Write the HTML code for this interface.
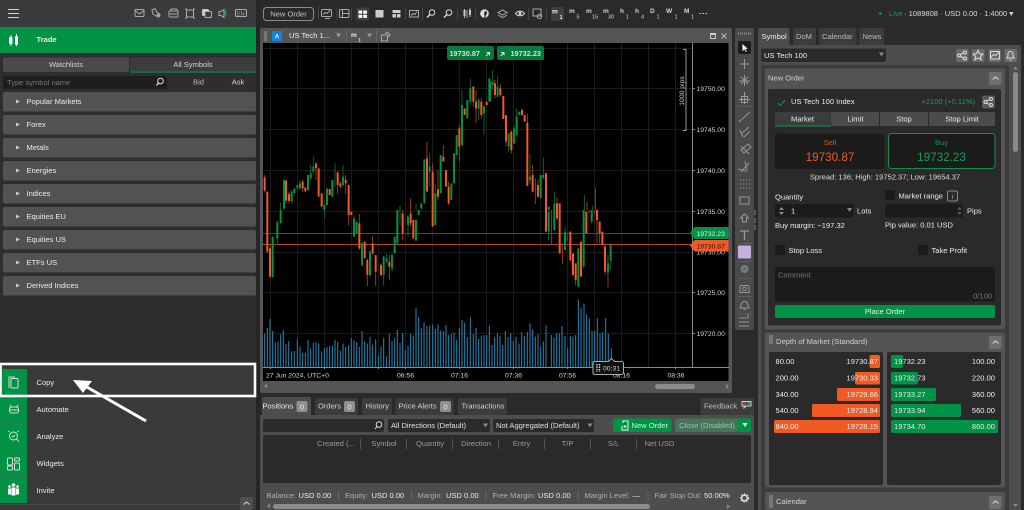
<!DOCTYPE html>
<html><head><meta charset="utf-8"><style>
html,body{margin:0;padding:0;background:#2a2a2a;width:1024px;height:510px;overflow:hidden}
svg{display:block;position:absolute;left:0;top:0}
text{font-family:"Liberation Sans",sans-serif;font-size:7.55px;fill:#d4d4d4}
.w{fill:#ececec}.d{fill:#9a9a9a}.m{text-anchor:middle}.e{text-anchor:end}.s{font-size:5.5px}.b{font-weight:bold}
.a{font-size:6.8px}
.ob,.gb,.ow,.gw,.v{fill:none}
.ob{stroke:#f15a24;stroke-width:6}.gb{stroke:#009245;stroke-width:6}
.ow{stroke:#a8431c;stroke-width:2.6}.gw{stroke:#0a6e38;stroke-width:2.6}
.v{stroke:#2280ae;stroke-width:3.2}
.i{fill:none;stroke:#ababab;stroke-width:1}
.i2{fill:none;stroke:#dcdcdc;stroke-width:1}
</style></head><body>
<svg width="1024" height="510" viewBox="0 0 1024 510">
<!-- base -->
<rect width="1024" height="510" fill="#2a2a2a"/>
<!-- left panel -->
<rect width="256" height="27" fill="#3b3b3b"/>
<rect y="27" width="256" height="336" fill="#2e2e2e"/>
<rect y="363" width="256" height="147" fill="#3a3a3a"/>
<rect x="256" width="4" height="510" fill="#262626"/>
<path d="M8 9.500h11M8 13.500h11M8 17.500h11" stroke="#d0d0d0" stroke-width="1"/>
<!-- top-left icons -->
<g class="i">
<rect x="135" y="9.500" width="9" height="7" rx="1"/><path d="M135 10.500l4.500 3.500 4.500-3.500"/>
<path d="M152 10l3-1.500 2 4 2 1v2l-3 .5-3-2z"/><circle cx="158.500" cy="15.500" r="1.500"/>
<rect x="169" y="11" width="9" height="6" rx="1"/><path d="M170 11l1.500-2h5l1.500 2M170 14h7"/>
<path d="M186.500 10h7v7h-7zM185 9h2M185 18h2M193 9h2M193 18h2"/>
<rect x="202.500" y="9.500" width="6" height="6" rx="1" fill="#ccc" stroke="#ccc"/><rect x="205" y="11.500" width="6.500" height="6" rx="1" fill="#3b3b3b"/>
<path d="M219 11.500h2l3-2v8l-3-2h-2z"/>
<rect x="235.500" y="9.500" width="11" height="7" rx="1"/>
</g>
<path d="M226 10.500v5l-1.500-2.500z" fill="#159a4c" stroke="#159a4c"/>
<text x="237" y="15.500" style="font-size:5.500px" class="d">EN</text>
<!-- Trade -->
<rect y="27" width="256" height="26" fill="#009245"/>
<path d="M11 35v11M16.500 34v12" stroke="#fff" stroke-width="1"/><rect x="9" y="37" width="3.500" height="7" rx="1" fill="#fff"/><rect x="15" y="36" width="3" height="9" rx="1" fill="#fff"/>
<text x="36.500" y="42" class="w b">Trade</text>
<!-- tabs -->
<rect x="3" y="57.500" width="126" height="14.500" rx="2" fill="#4a4a4a"/>
<rect x="130" y="57.500" width="126" height="15" rx="2" fill="#3c3c3c"/>
<rect x="130" y="71.500" width="126" height="1.200" fill="#0a8a44"/>
<text x="66" y="67" class="m">Watchlists</text><text x="193" y="67" class="m">All Symbols</text>
<rect x="3" y="76" width="164" height="13" rx="2" fill="#1e1e1e"/>
<text x="7" y="85" class="d" style="fill:#777">Type symbol name</text>
<circle cx="160.500" cy="81" r="2.800" class="i2"/><path d="M158.500 83l-2 2.500" stroke="#e8e8e8" stroke-width="1.200"/>
<text x="198.500" y="84.500" class="m" style="fill:#b8b8b8">Bid</text><text x="238" y="84.500" class="m">Ask</text>
<!-- market rows -->
<g fill="#525252">
<rect x="3" y="92" width="253" height="19.500" rx="2"/><rect x="3" y="115" width="253" height="19.500" rx="2"/><rect x="3" y="138" width="253" height="19.500" rx="2"/><rect x="3" y="161" width="253" height="19.500" rx="2"/><rect x="3" y="184" width="253" height="19.500" rx="2"/><rect x="3" y="207" width="253" height="19.500" rx="2"/><rect x="3" y="230" width="253" height="19.500" rx="2"/><rect x="3" y="253" width="253" height="19.500" rx="2"/><rect x="3" y="276" width="253" height="19.500" rx="2"/>
</g>
<g fill="#c8c8c8"><path d="M16 99.500l4 2-4 2zM16 122.500l4 2-4 2zM16 145.500l4 2-4 2zM16 168.500l4 2-4 2zM16 191.500l4 2-4 2zM16 214.500l4 2-4 2zM16 237.500l4 2-4 2zM16 260.500l4 2-4 2zM16 283.500l4 2-4 2z"/></g>
<text x="26.500" y="104" class="w">Popular Markets</text><text x="26.500" y="127" class="w">Forex</text><text x="26.500" y="150" class="w">Metals</text><text x="26.500" y="173" class="w">Energies</text><text x="26.500" y="196" class="w">Indices</text><text x="26.500" y="219" class="w">Equities EU</text><text x="26.500" y="242" class="w">Equities US</text><text x="26.500" y="265" class="w">ETFs US</text><text x="26.500" y="288" class="w">Derived Indices</text>
<!-- bottom menu -->
<rect x="0" y="369" width="27" height="134" fill="#009245"/>
<path d="M0 422.500h27M0 449.500h27M0 476.500h27M0 396.500h27" stroke="#2f7a50" stroke-width="1"/>
<path d="M0 504.500h256" stroke="#4b4b4b"/>
<g class="i2">
<path d="M9 388v-11h6"/><rect x="11" y="378.500" width="7" height="9.500" rx="1" fill="#009245"/>
<rect x="9.500" y="407" width="9" height="6" rx="2"/><path d="M10 405l1.500 2M18 405l-1.500 2M9.500 410h9"/>
<circle cx="13.500" cy="436" r="4"/><path d="M16.500 439l2.500 2.500M8 431l1.500 1M19 431l-1.500 1M11.500 436l1.500 1 2-2"/>
<rect x="7.500" y="458" width="5" height="7" rx="1"/><rect x="14.500" y="458" width="5" height="3" rx="1"/><rect x="7.500" y="466" width="5" height="4" rx="1"/><rect x="14.500" y="463" width="5" height="7" rx="1"/>
</g>
<g fill="#fff"><circle cx="13.500" cy="485" r="1.800"/><path d="M11.500 487.500h4v8h-4z"/><circle cx="9.500" cy="486.500" r="1.300"/><path d="M8 488.500h3v6H8z"/><circle cx="17.500" cy="486.500" r="1.300"/><path d="M16 488.500h3v6h-3z"/></g>
<text x="36.500" y="385" class="w">Copy</text><text x="36.500" y="412" class="w">Automate</text><text x="36.500" y="439" class="w">Analyze</text><text x="36.500" y="466" class="w">Widgets</text><text x="36.500" y="493" class="w">Invite</text>
<rect x="240" y="497" width="13" height="13" rx="1.500" fill="#4f4f4f"/><path d="M243.500 504.500l3-2.500 3 2.500" class="i2"/>
<!-- highlight -->
<rect x="0.500" y="364" width="254.500" height="32" fill="none" stroke="#fff" stroke-width="2.600"/>
<path d="M146 421L85 386" stroke="#fff" stroke-width="3"/><path d="M73 380l19 1-9 12z" fill="#fff"/>
<!-- top bar -->
<rect x="263.500" y="7.500" width="50" height="13" rx="3" fill="#2a2a2a" stroke="#8a8a8a"/><text x="288.500" y="16.500" class="m" style="fill:#c4c4c4">New Order</text>
<path d="M318.500 7v13M337 7v13M351.500 7v13M405.500 7v13M422.500 7v13M457.500 7v13M475.500 7v13M528.500 7v13M546.500 7v13" stroke="#444"/>
<g class="i">
<rect x="321.500" y="9.500" width="10" height="7" rx="1"/><path d="M323 14.500l2-2 2 1 3-3M325 18.500h5"/>
<rect x="339.500" y="9.500" width="9.500" height="8" rx="1"/><path d="M342.500 9.500v8M342.500 13.500h6.500"/>
</g>
<rect x="356.500" y="7.500" width="12.500" height="13" rx="2" fill="#3e3e3e"/>
<path d="M358.500 10.500h3.700v3.200h-3.700zM363.200 10.500h3.700v3.200h-3.700zM358.500 14.700h3.700v3.200h-3.700zM363.200 14.700h3.700v3.200h-3.700z" fill="#fff"/>
<rect x="375.500" y="10" width="8" height="7.500" fill="#ccc"/>
<path d="M392.500 10h8v3h-8zM392.500 14h3.500v3.500h-3.500zM397 14h3.500v3.500H397z" fill="#ccc"/>
<g class="i"><path d="M409.500 10.500h9v6.500h-9zM411 15.500l2-2 2 1 2-3"/>
<circle cx="432" cy="12.500" r="2.800" stroke="#ddd"/><path d="M430 14.500l-3 3" stroke="#ddd" stroke-width="1.400"/><circle cx="449" cy="12.500" r="2.800" stroke="#ddd"/><path d="M447 14.500l-3 3" stroke="#ddd" stroke-width="1.400"/>
<path d="M464.500 9v9M467 10v8M470 8v9"/><path d="M498 12.500l4.500-2.500 4.500 2.500-4.500 2.500zM498 15l4.500 2.500 4.500-2.500"/><path d="M515.500 13.500c2-3 7-3 9 0-2 3-7 3-9 0z" stroke="#ddd"/>
<rect x="533" y="9" width="8" height="7"/><circle cx="539.500" cy="16.500" r="2.200"/></g>
<rect x="463.500" y="10" width="2" height="6" fill="#ccc"/><rect x="469" y="10" width="2" height="5" fill="#ccc"/>
<circle cx="484.500" cy="13.500" r="4.300" fill="#ddd"/><path d="M485 17.500v-5.500h2M484 13.800h3" stroke="#2a2a2a" stroke-width="1.200"/>
<circle cx="520" cy="13.500" r="1.500" fill="#ddd"/>
<rect x="551" y="7" width="13" height="14" rx="2" fill="#3e3e3e"/>
<text x="552" y="13.500" class="b w" style="font-size:6.500px">m</text><text x="559.500" y="19" class="s b w">1</text>
<text x="569" y="13" class="b" style="font-size:6.500px">m</text><text x="576.500" y="18.500" class="s">5</text>
<text x="586" y="13" class="b" style="font-size:6.500px">m</text><text x="592" y="18.500" class="s">15</text>
<text x="603" y="13" class="b" style="font-size:6.500px">m</text><text x="608" y="18.500" class="s">30</text>
<text x="620" y="13" class="b" style="font-size:6.500px">h</text><text x="626" y="18.500" class="s">1</text>
<text x="635" y="13" class="b" style="font-size:6.500px">h</text><text x="641" y="18.500" class="s">4</text>
<text x="650" y="13" class="b" style="font-size:6.500px">D</text><text x="656.500" y="18.500" class="s">1</text>
<text x="666" y="13" class="b" style="font-size:6.500px">W</text><text x="674.500" y="18.500" class="s">1</text>
<text x="684" y="13" class="b" style="font-size:6.500px">M</text><text x="691" y="18.500" class="s">1</text>
<path d="M699.500 13.500h1.500M702.500 13.500h1.500M705.500 13.500h1.500" stroke="#ddd"/>
<circle cx="880.500" cy="13.500" r="1.500" fill="#0a8a44"/>
<text x="889" y="16" style="fill:#139a4e">Live</text>
<text x="904" y="16" style="fill:#dcdcdc">· 1089808 · USD 0.00 · 1:4000</text>
<path d="M1009 12h4.500l-2.200 4z" fill="#ccc"/>

<!-- chart panel -->
<rect x="260" y="28" width="472" height="365" rx="2" fill="#555"/>
<rect x="263" y="43" width="465.500" height="338" fill="#000"/>
<rect x="264" y="31" width="3" height="10" fill="#777"/>
<rect x="272" y="31" width="10" height="10" fill="#0a84e0"/><text x="277" y="38.500" class="m b w" style="font-size:6.500px">A</text>
<text x="289" y="38" class="w">US Tech 1...</text><path d="M336 33.500h5l-2.500 4z" fill="#999"/>
<path d="M346.500 30v11" stroke="#6a6a6a"/>
<text x="351" y="37" class="b w" style="font-size:6.500px">m</text><text x="358" y="42" class="s w">1</text><path d="M367 33.500h5l-2.500 4z" fill="#999"/>
<path d="M376.500 30v11" stroke="#6a6a6a"/>
<g class="i"><rect x="381.500" y="35" width="6" height="6"/><path d="M385 34l2-2 3 3-2 2"/></g>
<rect x="710.500" y="33.500" width="5" height="5" fill="none" stroke="#ccc"/><path d="M710.500 34.500h5" stroke="#ccc"/>
<path d="M721.500 33.500l5 5M726.500 33.500l-5 5" stroke="#bbb"/>
<!-- grid -->
<g stroke="#1b1b1b" stroke-width="1">
<path d="M270.500 43v324M297.500 43v324M324.500 43v324M351.500 43v324M378.500 43v324M405.500 43v324M432.500 43v324M459.500 43v324M486.500 43v324M513.500 43v324M540.500 43v324M567.500 43v324M594.500 43v324M621.500 43v324M648.500 43v324M675.500 43v324"/>
<path d="M263 48.500h429M263 88.500h429M263 129.500h429M263 170.500h429M263 211.500h429M263 252.500h429M263 292.500h429M263 333.500h429"/>
</g>
<!-- price lines -->
<path d="M263 233.500h428" stroke="#0b6a38"/><path d="M263 244.500h428" stroke="#b34a1d"/>
<!-- volumes -->
<g transform="translate(260 200) scale(.33333)"><path class="v" d="M14 502V400M22 502V383M30 502V357M38 502V393M46 502V427M54 502V424M62 502V403M70 502V391M78 502V431M86 502V423M95 502V454M103 502V453M112 502V418M120 502V440M128 502V458M136 502V458M144 502V420M152 502V445M160 502V428M168 502V426M176 502V431M185 502V454M193 502V444M201 502V441M209 502V438M217 502V437M225 502V420M233 502V426M241 502V452M249 502V431M257 502V441M266 502V436M274 502V414M282 502V420M290 502V426M298 502V441M306 502V393M314 502V424M322 502V430M330 502V410M338 502V434M347 502V418M355 502V467M363 502V440M371 502V414M380 502V469M388 502V401M396 502V423M404 502V415M412 502V390M420 502V429M428 502V399M436 502V450M444 502V438M452 502V402M460 502V407M468 502V324M476 502V351M484 502V384M492 502V367M501 502V378M509 502V376M518 502V374M526 502V387M534 502V373M542 502V391M550 502V393M558 502V375M566 502V405M574 502V402M582 502V397M590 502V420M598 502V384M606 502V360M614 502V368M622 502V411M631 502V351M640 502V402M648 502V384M656 502V417M664 502V407M672 502V405M680 502V405M688 502V377"/></g>
<g transform="translate(490 200) scale(.33333)"><path class="v" d="M6 502V435M14 502V412M22 502V400M30 502V407M38 502V435M46 502V393M54 502V411M62 502V400M70 502V423M78 502V410M87 502V431M95 502V397M103 502V408M112 502V396M120 502V370M128 502V389M136 502V410M144 502V403M152 502V441M160 502V424M168 502V376M184 502V405M192 502V412M200 502V400M208 502V400M216 502V378M225 502V408M233 502V443M241 502V408M249 502V410M257 502V405M265 502V298M273 502V325M282 502V311M290 502V343M298 502V355M306 502V392M314 502V392M322 502V354M330 502V400M338 502V396M347 502V354M355 502V401M364 502V445"/></g>
<!-- candles Z8 -->
<g transform="translate(260 40) scale(.33333)">
<path class="ow" d="M14 405V458M78 420V490M87 455V490M128 418V455M168 368V420M233 395V462M241 425V445M257 405V462M501 305V360M518 370V395M534 390V480M550 315V365M566 425V495M598 255V365M640 138V200M648 150V250M664 175V235M452 475V510"/>
<path class="gw" d="M62 488V510M72 418V510M95 450V490M120 420V450M144 405V452M152 375V420M160 350V400M193 490V510M225 370V440M249 375V440M420 498V510M468 492V510M484 488V510M509 340V440M526 430V510M606 150V320M631 115V190M656 175V240M672 195V285"/>
<path class="ob" d="M14 412V452M22 455V510M78 422V482M87 462V483M128 425V445M136 442V455M168 370V385M176 385V470M185 460V500M209 447V465M233 397V435M241 430V440M257 420V430M266 435V510M501 355V455M518 395V510M534 448V470M550 350V365M558 390V440M566 440V490M598 265V320M614 205V225M640 140V185M648 185V205M664 185V225M680 185V195"/>
<path class="gb" d="M72 420V505M95 455V485M103 445V460M112 435V445M120 430V445M144 405V450M152 400V415M160 380V395M201 445V495M217 420V470M249 410V435M193 495V510M484 490V505M493 358V490M509 380V395M526 460V510M542 345V460M574 430V480M582 340V430M590 285V345M606 195V315M622 180V235M631 145V185M656 180V205M672 200V220M688 115V185"/>
</g>
<g transform="translate(260 200) scale(.33333)">
<path class="ow" d="M22 30V160M30 140V235M266 30V75M298 42V150M322 175V258M338 108V165M347 165V258M363 190V228M388 165V240M428 30V122M452 30V80M460 60V118"/>
<path class="gw" d="M52 65V135M193 30V55M282 45V110M306 125V200M330 150V230M371 168V258M380 162V190M396 160V215M412 30V130M420 18V75M444 45V110M468 60V122"/>
<path class="ob" d="M22 30V155M30 145V230M266 30V45M274 35V45M298 70V145M314 125V175M322 180V225M338 130V160M347 165V215M363 195V225M388 185V200M428 40V100M452 40V70M460 60V115M518 30V80"/>
<path class="gb" d="M38 110V232M52 65V115M62 30V70M282 55V110M290 65V100M306 130V195M330 155V225M371 170V225M380 175V185M396 165V205M404 110V160M412 30V130M444 50V75M468 60V122M476 30V45M526 30V75"/>
</g>
<g transform="translate(490 40) scale(.33333)">
<path class="ow" d="M15 120V175M31 132V170M48 225V318M64 272V340M96 205V228M112 222V438M128 375V458M136 415V492M144 418V472M168 398V510M201 472V510M291 485V510M316 442V510"/>
<path class="gw" d="M8 90V150M23 108V172M56 280V335M72 258V312M80 205V288M120 340V432M160 352V415M193 455V510M283 465V510M307 497V510"/>
<path class="ob" d="M15 130V165M31 145V165M40 168V237M48 225V305M64 275V330M96 210V225M104 225V245M112 248V438M128 405V455M144 435V470M168 400V510M201 490V510M209 490V510"/>
<path class="gb" d="M0 125V185M8 125V135M23 140V170M56 280V320M72 265V310M80 230V285M88 215V225M120 410V420M152 405V475M160 405V415M176 500V510M193 490V510"/>
</g>
<g transform="translate(490 200) scale(.33333)">
<path class="ow" d="M185 30V135M201 30V60M217 130V192M241 95V185M257 190V255M273 125V230M297 30V40M313 30V40M321 30V130M329 65V130M345 130V225M354 165V262"/>
<path class="gw" d="M176 35V122M193 30V92M225 80V152M233 98V125M265 145V262M281 30V205M305 30V70M362 135V208"/>
<path class="ob" d="M168 30V95M201 30V55M209 30V160M241 95V180M249 160V225M257 190V240M273 125V230M289 35V100M321 30V60M329 65V100M337 95V135M345 140V215"/>
<path class="gb" d="M176 35V95M193 30V90M225 95V150M265 145V260M281 30V200M305 30V65M354 190V218M362 135V182"/>
</g>
<!-- axes -->
<path d="M692.500 43v324" stroke="#8a8a8a"/><path d="M263 367.500h466" stroke="#8a8a8a"/>
<path d="M692 88.500h3M692 129.500h3M692 170.500h3M692 211.500h3M692 292.500h3M692 333.500h3M270.500 367v2M324.500 367v2M378.500 367v2M405.500 367v2M459.500 367v2M513.500 367v2M567.500 367v2M621.500 367v2M675.500 367v2" stroke="#8a8a8a"/>
<text x="696.500" y="91" class="a">19750.00</text><text x="696.500" y="132" class="a">19745.00</text><text x="696.500" y="173" class="a">19740.00</text><text x="696.500" y="214" class="a">19735.00</text><text x="696.500" y="254.500" class="a">19730.00</text><text x="696.500" y="295" class="a">19725.00</text><text x="696.500" y="336" class="a">19720.00</text>
<text x="266" y="377.500" class="a">27 Jun 2024, UTC+0</text>
<text x="405.500" y="377.500" class="m a">06:56</text><text x="459.500" y="377.500" class="m a">07:16</text><text x="513.500" y="377.500" class="m a">07:36</text><text x="567.500" y="377.500" class="m a">07:56</text><text x="621.500" y="377.500" class="m a">08:16</text><text x="676" y="377.500" class="m a">08:36</text>
<!-- price tags -->
<path d="M690 233l4.500-6H728.500v12H694.500z" fill="#009245"/><path d="M690 245.500l4.500-5.500H728.500v11.500H694.500z" fill="#f15a24"/>
<text x="696.500" y="235.800" class="a w">19732.23</text><text x="696.500" y="248.300" class="a" style="fill:#3a0d00">19730.87</text>
<!-- 1000 pips -->
<path d="M683 49.500h3v81h-3" fill="none" stroke="#999"/><text transform="translate(684 91) rotate(-90)" class="m" style="font-size:6.800px;fill:#ccc">1000 pips</text>
<!-- top price buttons -->
<rect x="447" y="46" width="47" height="14" rx="2" fill="#067a3c"/><rect x="497" y="46" width="47" height="14" rx="2" fill="#067a3c"/>
<text x="449.500" y="55.800" class="b" style="fill:#cfe3d6;font-size:7.300px">19730.87</text><text x="510.500" y="55.800" class="b" style="fill:#cfe3d6;font-size:7.300px">19732.23</text>
<path d="M486 56l3.500-3.500M486.500 52.500h3v3M500.500 56l3.500-3.500M501 52.500h3v3" stroke="#d8e8dc" fill="none"/>
<!-- countdown -->
<path d="M594.500 361.500h14l3-3 3 3h7a2 2 0 0 1 2 2v9a2 2 0 0 1-2 2h-27a1.500 1.500 0 0 1-1.500-1.500v-10a1.500 1.500 0 0 1 1.500-1.500z" fill="#111" stroke="#aaa"/>
<path d="M597 364v8M599.500 364v8" stroke="#ddd" stroke-dasharray="1.500 1" stroke-width="1.300"/>
<text x="603" y="370.300" class="a">00:31</text>
<!-- chart scrollbar -->
<path d="M264 386l3-2.500v5z" fill="#888"/><rect x="655" y="384" width="40" height="5" rx="2.500" fill="#8c8c8c"/><path d="M726 384l3 2.500-3 2.500z" fill="#888"/>

<!-- vertical tool bar -->
<rect x="735" y="28" width="19" height="302" rx="2" fill="#4a4a4a"/>
<path d="M738 33.500h13" stroke="#888" stroke-width="2.200" stroke-dasharray="1 1"/>
<rect x="738" y="41" width="13" height="13" rx="2" fill="#1c1c1c"/><path d="M742.500 44l0 7 2-1.500 1.500 2.500.8-.6-1.400-2.400 2.300-.2z" fill="#fff"/>
<g class="i" style="stroke:#989898">
<path d="M744.500 59v10M740 64h9"/>
<path d="M744.500 75v11M739 81h11M741 77l7 7M748 77l-7 7"/>
<path d="M744.500 92v12M739 99.500h11M741.500 96.500h6v6h-6z"/>
<path d="M739 122l11-10"/>
<path d="M741 134l8-7M744 137l6-6M740 130l3 7"/>
<path d="M741 150l7-6 3 3-7 6zM741 146l8 8"/>
<path d="M741 172l8-9M738 169l9 2M745 161l2 9"/>
<path stroke-dasharray="1 2" d="M740 180h10M740 184h10M740 188h10"/>
<rect x="740" y="197" width="9" height="7"/>
<path d="M744.500 214l-4 4h2v4h4v-4h2z"/>
<path d="M740 231h9M744.500 231v9" stroke-width="1.300"/>
<path d="M741 285.500h7l1 1.500v5.500h-9V287z"/><circle cx="744.500" cy="289" r="1.800"/>
<path d="M741 306c0-6 7-6 7 0l1 2h-9zM743.500 309.500h2"/>
<path d="M739 318h7M739 326h10M739 322h10M748 314v5"/>
</g>
<path d="M738.500 243.500h13M738.500 261.500h13M738.500 278.500h13M738.500 296.500h13M738.500 314h13M738.500 106.500h13" stroke="#5e5e5e"/>
<rect x="738" y="245.500" width="13" height="13" rx="1" fill="#c5b0df"/>
<circle cx="744.500" cy="269" r="4" fill="#7a7a7a"/><circle cx="744.500" cy="269" r="1" fill="#555"/>
<path d="M755 210v5M755 218v5M755 225v5" stroke="#666" stroke-width="1.600"/>

<!-- positions panel -->
<rect x="262" y="397" width="49" height="20" rx="2" fill="#4d4d4d"/>
<rect x="315" y="398" width="43" height="17" rx="2" fill="#3c3c3c"/><rect x="362" y="398" width="30" height="17" rx="2" fill="#3c3c3c"/><rect x="395.500" y="398" width="58" height="17" rx="2" fill="#3c3c3c"/><rect x="458" y="398" width="49" height="17" rx="2" fill="#3c3c3c"/><rect x="700.500" y="398" width="53.500" height="17" rx="2" fill="#3c3c3c"/>
<rect x="260" y="415" width="494" height="95" fill="#4d4d4d"/>
<text x="262.500" y="408.500" class="w">Positions</text>
<rect x="296.500" y="401" width="11" height="11" rx="2" fill="#8f8f8f"/><text x="302" y="409.300" class="m w">0</text>
<text x="318" y="408.500">Orders</text><rect x="344" y="401" width="11" height="11" rx="2" fill="#8f8f8f"/><text x="349.500" y="409.300" class="m w">0</text>
<text x="365.500" y="408.500">History</text>
<text x="398.500" y="408.500">Price Alerts</text><rect x="440" y="401" width="11" height="11" rx="2" fill="#8f8f8f"/><text x="445.500" y="409.300" class="m w">0</text>
<text x="461.500" y="408.500">Transactions</text>
<text x="704" y="408.500" style="fill:#bbb">Feedback</text>
<rect x="742" y="401.500" width="9" height="4.500" fill="none" stroke="#ccc"/><path d="M743 402h3v3h-3z" fill="#c8342a"/><path d="M747 402h3v3h-3z" fill="#159a4c"/><path d="M744 406v2l2-2" fill="none" stroke="#ccc"/>
<rect x="263" y="419" width="121" height="13" rx="2" fill="#2a2a2a"/><circle cx="379" cy="424.500" r="2.800" class="i2"/><path d="M377 426.500l-2 2.500" stroke="#e8e8e8"/>
<rect x="388" y="419" width="102" height="13" rx="2" fill="#2a2a2a"/><rect x="493" y="419" width="101" height="13" rx="2" fill="#2a2a2a"/>
<text x="391" y="428" style="fill:#e0e0e0">All Directions (Default)</text><text x="496" y="428" style="fill:#e0e0e0">Not Aggregated (Default)</text>
<path d="M483 423.500h5l-2.500 4zM587.500 423.500h5l-2.500 4z" fill="#888"/>
<rect x="613" y="418.500" width="58.500" height="13.500" rx="2" fill="#009245"/>
<path d="M623 423v-2h5v9h-6v-4" fill="none" stroke="#e8f4ec"/><path d="M625 428v-3M623.500 426.500h3" stroke="#e8f4ec"/>
<text x="631.500" y="428" style="fill:#d8f0e0">New Order</text>
<rect x="675" y="418.500" width="63" height="13.500" rx="2" fill="#46745a"/><text x="707" y="428" style="fill:#9ec2ac" class="m">Close (Disabled)</text>
<rect x="738" y="418.500" width="13" height="13.500" rx="1" fill="#009245"/><path d="M742.500 423h5l-2.500 4z" fill="#fff"/>
<rect x="263" y="435" width="488" height="48" rx="2" fill="#2a2a2a"/>
<text x="317" y="446" class="d">Created (...</text><text x="384" y="446" class="d m">Symbol</text><text x="430" y="446" class="d m">Quantity</text><text x="476" y="446" class="d m">Direction</text><text x="521.500" y="446" class="d m">Entry</text><text x="567.500" y="446" class="d m">T/P</text><text x="613.500" y="446" class="d m">S/L</text><text x="659.500" y="446" class="d m">Net USD</text>
<path d="M360.500 439v10M406.500 439v10M452.500 439v10M498.500 439v10M544.500 439v10M590.500 439v10M636.500 439v10" stroke="#555"/>
<text x="266.500" y="498" style="fill:#b0b0b0">Balance:</text><text x="298.500" y="498" class="w">USD 0.00</text>
<text x="345" y="498" style="fill:#b0b0b0">Equity:</text><text x="371.500" y="498" class="w">USD 0.00</text>
<text x="417.500" y="498" style="fill:#b0b0b0">Margin:</text><text x="446" y="498" class="w">USD 0.00</text>
<text x="492.500" y="498" style="fill:#b0b0b0">Free Margin:</text><text x="538" y="498" class="w">USD 0.00</text>
<text x="584.500" y="498" style="fill:#b0b0b0">Margin Level:</text><text x="632.500" y="498" class="w">—</text>
<text x="654.500" y="498" style="fill:#b0b0b0">Fair Stop Out:</text><text x="704" y="498" class="w">50.00%</text>
<path d="M338.500 491v9M411.500 491v9M486 491v9M578 491v9M648 491v9" stroke="#666"/>
<circle cx="744.500" cy="498" r="2.800" fill="none" stroke="#e0e0e0" stroke-width="1.500"/><circle cx="744.500" cy="498" r="4" fill="none" stroke="#e0e0e0" stroke-width="1.200" stroke-dasharray="1.500 1.500"/>
<path d="M267 506l3-2.500v5z" fill="#888"/><rect x="273" y="504" width="377" height="5" rx="2.500" fill="#8c8c8c"/><path d="M727 504l3 2.500-3 2.500z" fill="#888"/>

<!-- right panel -->
<rect x="758" y="28" width="31.500" height="19" rx="2" fill="#4d4d4d"/>
<rect x="793" y="28" width="23" height="17" rx="2" fill="#3c3c3c"/><rect x="819" y="28" width="37.500" height="17" rx="2" fill="#3c3c3c"/><rect x="859" y="28" width="25" height="17" rx="2" fill="#3c3c3c"/>
<rect x="758" y="45" width="263" height="465" fill="#4d4d4d"/>
<text x="761.500" y="39" class="w">Symbol</text><text x="796" y="39" style="fill:#bbb">DoM</text><text x="822" y="39" style="fill:#bbb">Calendar</text><text x="862.500" y="39" style="fill:#bbb">News</text>
<rect x="761" y="48.500" width="125" height="13.500" rx="2" fill="#2a2a2a"/><text x="764" y="58" class="w">US Tech 100</text><path d="M879 52.500h5l-2.500 4z" fill="#888"/>
<g fill="#6b6b6b"><rect x="956" y="49" width="12.500" height="13" rx="2"/><rect x="972" y="49" width="12.500" height="13" rx="2"/><rect x="988.500" y="49" width="12.500" height="13" rx="2"/><rect x="1004.500" y="49" width="12.500" height="13" rx="2"/></g>
<g class="i2">
<circle cx="959" cy="55.500" r="1.500"/><circle cx="965" cy="52.500" r="1.500"/><circle cx="965" cy="58.500" r="1.500"/><path d="M960.500 54.500l3-1.500M960.500 56.500l3 1.500"/>
<path d="M978 50.500l1.500 3.300 3.500.3-2.700 2.300.9 3.400-3.200-1.800-3.200 1.800.9-3.400-2.700-2.300 3.500-.3z"/>
<rect x="990.500" y="51.500" width="9" height="7.500"/><path d="M991 57l2.500-2.500 2 1 3.500-3"/>
<path d="M1007 58c1-1 1-2 1-4 0-3.500 5-3.500 5 0 0 2 0 3 1 4zM1009.500 60h2"/>
</g>
<rect x="761" y="65" width="248" height="445" fill="#3c3c3c"/>
<rect x="1013" y="72" width="5" height="80" rx="2.500" fill="#8a8a8a"/>
<path d="M1015.500 66.500l2.500 3h-5zM1015.500 507l2.500-3h-5z" fill="#888"/>
<!-- new order card -->
<rect x="765" y="68.500" width="240" height="261" rx="2" fill="#545454"/>
<text x="768" y="80.500" style="fill:#d0d0d0">New Order</text>
<rect x="989" y="72" width="12.500" height="13" rx="2" fill="#6f6f6f"/><path d="M992.500 79.500l3-2.500 3 2.500" class="i2"/>
<rect x="768" y="89" width="233" height="236.500" rx="2" fill="#2a2a2a"/>
<path d="M778 103l2.500 2.500 4.500-5.500" fill="none" stroke="#0f8f46"/>
<text x="791" y="104" class="w">US Tech 100 Index</text>
<text x="975" y="104" class="e" style="fill:#18a04f">+2100 (+0.11%)</text>
<rect x="982" y="95.500" width="13" height="13" rx="2" fill="#5a5a5a"/>
<g class="i2"><circle cx="985.500" cy="102" r="1.500"/><circle cx="991" cy="99" r="1.500"/><circle cx="991" cy="105" r="1.500"/><path d="M987 101l2.500-1.500M987 103l2.500 1.500"/></g>
<rect x="775" y="112" width="55.500" height="14" fill="#3c3c3c"/><rect x="775" y="125.500" width="55.500" height="1.200" fill="#0a8a44"/>
<rect x="831" y="112" width="48" height="14" fill="#4b4b4b"/><rect x="880" y="112" width="48" height="14" fill="#4b4b4b"/><rect x="929" y="112" width="66" height="14" rx="1" fill="#4b4b4b"/>
<text x="802.500" y="121.500" class="m w">Market</text><text x="855.500" y="121.500" class="m w">Limit</text><text x="904" y="121.500" class="m w">Stop</text><text x="962" y="121.500" class="m w">Stop Limit</text>
<rect x="775" y="133.500" width="109.500" height="35.500" rx="3" fill="#1b1b1b"/>
<rect x="888.500" y="133.500" width="106.500" height="35" rx="3" fill="#1b1b1b" stroke="#0e8f44"/>
<text x="830" y="145" class="m" style="fill:#e2571b">Sell</text><text x="941.500" y="145" class="m" style="fill:#119146">Buy</text>
<text x="830" y="161" class="m" style="font-size:11.700px;fill:#f25a1d">19730.87</text><text x="941.500" y="161" class="m" style="font-size:11.700px;fill:#14a04c">19732.23</text>
<text x="885" y="179.500" class="m" style="fill:#dcdcdc">Spread: 136; High: 19752.37; Low: 19654.37</text>
<text x="775" y="199.500" class="w">Quantity</text>
<rect x="885" y="190" width="10" height="10" rx="1.500" fill="#1b1b1b"/><text x="898.500" y="198.500" class="w">Market range</text>
<rect x="947.500" y="191" width="10" height="10" rx="1.500" fill="none" stroke="#888"/><text x="952.500" y="199" class="m" style="font-style:italic;fill:#aaa">i</text>
<rect x="775" y="204" width="78.500" height="13.500" rx="2" fill="#1b1b1b"/>
<path d="M779 210l2.500-3 2.500 3zM779 212l2.500 3 2.500-3zM847 208h5l-2.500 4z" fill="#888"/>
<text x="791" y="213.500" class="w">1</text><text x="857" y="213.500" class="w">Lots</text>
<rect x="885" y="204" width="78" height="13.500" rx="2" fill="#1b1b1b"/><path d="M957 210l2.500-3 2.500 3zM957 212l2.500 3 2.500-3z" fill="#555"/><text x="967" y="213.500" class="w">Pips</text>
<text x="775" y="228" class="w">Buy margin: ~197.32</text><text x="885" y="227.500" class="w">Pip value: 0.01 USD</text>
<rect x="775" y="245" width="10" height="10" rx="1.500" fill="#1b1b1b"/><text x="788.500" y="253" class="w">Stop Loss</text>
<rect x="918" y="245" width="10" height="10" rx="1.500" fill="#1b1b1b"/><text x="931.500" y="253" class="w">Take Profit</text>
<rect x="775" y="267" width="220" height="34.500" rx="2" fill="#1b1b1b"/><text x="778" y="277.500" style="fill:#777">Comment</text><text x="992" y="298.500" class="e" style="fill:#777">0/100</text>
<rect x="775" y="305" width="220" height="13" rx="2" fill="#009245"/><text x="885" y="314" class="m w">Place Order</text>
<!-- DOM card -->
<rect x="765" y="332.500" width="240" height="155" rx="2" fill="#545454"/>
<rect x="769" y="335" width="4" height="9" fill="#777"/><text x="776" y="344" style="fill:#d0d0d0">Depth of Market (Standard)</text>
<rect x="989" y="336" width="12.500" height="13" rx="2" fill="#6f6f6f"/><path d="M992.500 343.500l3-2.500 3 2.500" class="i2"/>
<rect x="769" y="352" width="114" height="133" rx="2" fill="#2a2a2a"/><rect x="887" y="352" width="114" height="133" rx="2" fill="#2a2a2a"/>
<g fill="#f15a24"><rect x="869.500" y="355" width="10.500" height="13" rx="1.500"/><rect x="855" y="372" width="25" height="12.500" rx="1.500"/><rect x="837" y="388" width="43" height="13" rx="1.500"/><rect x="812" y="404" width="68" height="13" rx="1.500"/><rect x="774" y="420" width="106" height="13" rx="1.500"/></g>
<g fill="#009245"><rect x="891" y="355" width="12" height="13" rx="1.500"/><rect x="891" y="372" width="27" height="12.500" rx="1.500"/><rect x="891" y="388" width="45" height="13" rx="1.500"/><rect x="891" y="404" width="70" height="13" rx="1.500"/><rect x="891" y="420" width="107" height="13" rx="1.500"/></g>
<text x="775.500" y="364" class="w">80.00</text><text x="878" y="364" class="e w">19730.87</text><text x="894" y="364" class="w">19732.23</text><text x="995" y="364" class="e w">100.00</text>
<text x="775.500" y="380.500" class="w">200.00</text><text x="878" y="380.500" class="e w">19730.33</text><text x="894" y="380.500" class="w">19732.73</text><text x="995" y="380.500" class="e w">220.00</text>
<text x="775.500" y="397" class="w">340.00</text><text x="878" y="397" class="e w">19729.66</text><text x="894" y="397" class="w">19733.27</text><text x="995" y="397" class="e w">360.00</text>
<text x="775.500" y="413" class="w">540.00</text><text x="878" y="413" class="e w">19728.94</text><text x="894" y="413" class="w">19733.94</text><text x="995" y="413" class="e w">560.00</text>
<text x="775.500" y="429" class="w">840.00</text><text x="878" y="429" class="e w">19728.15</text><text x="894" y="429" class="w">19734.70</text><text x="995" y="429" class="e w">860.00</text>
<!-- calendar -->
<rect x="765" y="492" width="240" height="18" rx="2" fill="#545454"/>
<rect x="769" y="495" width="4" height="13" fill="#777"/><text x="776" y="504" style="fill:#d0d0d0">Calendar</text>
<rect x="989" y="496" width="12.500" height="13" rx="2" fill="#6f6f6f"/><path d="M992.500 503.500l3-2.500 3 2.500" class="i2"/>
</svg>
</body></html>
